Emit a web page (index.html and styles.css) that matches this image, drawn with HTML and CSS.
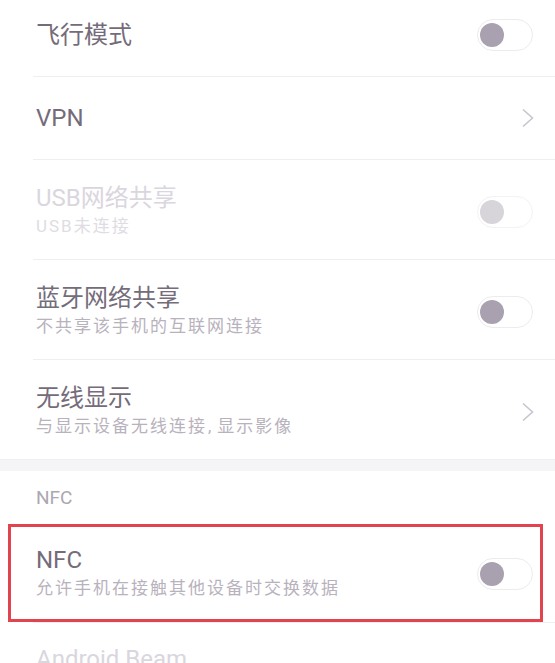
FILE: index.html
```html
<!DOCTYPE html>
<html>

<head>
    <meta charset="utf-8">
    <link rel="stylesheet" href="styles.css">
</head>

<body>
    <div class="list">
        <div class="row single">
            <div class="text"><div class="title">飞行模式</div></div>
            <div class="switch"><span class="knob"></span></div>
        </div>
        <div class="row single">
            <div class="text"><div class="title">VPN</div></div>
            <div class="chevron">
                <svg width="14" height="20" viewBox="0 0 14 20"><path d="M2 1.5 L11.5 10 L2 18.5" fill="none" stroke="#c9c4cd" stroke-width="1.6"/></svg>
            </div>
        </div>
        <div class="row double disabled">
            <div class="text">
                <div class="title">USB网络共享</div>
                <div class="summary">USB未连接</div>
            </div>
            <div class="switch"><span class="knob"></span></div>
        </div>
        <div class="row double">
            <div class="text">
                <div class="title">蓝牙网络共享</div>
                <div class="summary">不共享该手机的互联网连接</div>
            </div>
            <div class="switch"><span class="knob"></span></div>
        </div>
        <div class="row double last">
            <div class="text">
                <div class="title">无线显示</div>
                <div class="summary">与显示设备无线连接<span class="comma">,</span>显示影像</div>
            </div>
            <div class="chevron">
                <svg width="14" height="20" viewBox="0 0 14 20"><path d="M2 1.5 L11.5 10 L2 18.5" fill="none" stroke="#c9c4cd" stroke-width="1.6"/></svg>
            </div>
        </div>
    </div>

    <div class="gap"></div>

    <div class="list">
        <div class="header">NFC</div>
        <div class="row double marked">
            <div class="text">
                <div class="title">NFC</div>
                <div class="summary">允许手机在接触其他设备时交换数据</div>
            </div>
            <div class="switch"><span class="knob"></span></div>
        </div>
        <div class="row beam disabled">
            <div class="text">
                <div class="title">Android Beam</div>
            </div>
        </div>
    </div>
</body>

</html>
```

FILE: styles.css
```css
body {
    margin: 0;
    background-color: #fff;
    font-family: Roboto, "Noto Sans CJK SC", sans-serif;
    overflow: hidden;
}

.list {
    background-color: #fff;
}

.list:first-child {
    margin-top: -6px;
}

.row {
    display: flex;
    align-items: center;
    justify-content: space-between;
    margin-left: 33px;
    padding: 0 22px 0 3px;
    border-bottom: 1px solid #f0eef2;
    position: relative;
}

.row.single {
    height: 82px;
}

.row.double {
    padding-top: 24px;
    padding-bottom: 19px;
    box-sizing: border-box;
    height: 100px;
}

.row.last {
    border-bottom: none;
    height: 99px;
}

.title {
    font-size: 24px;
    line-height: 28px;
    color: #746c7a;
}

.summary {
    font-size: 17px;
    line-height: 28px;
    letter-spacing: 2px;
    color: #b8b2bd;
}

.summary .comma {
    margin: 0 4px 0 1px;
}

.disabled .title {
    color: #dad6de;
}

.disabled .summary {
    color: #e0dce3;
}

.switch {
    width: 56px;
    height: 32px;
    box-sizing: border-box;
    border: 1.5px solid #ecebee;
    border-radius: 16px;
    background-color: #fff;
    display: flex;
    align-items: center;
    padding-left: 2px;
}

.knob {
    width: 24px;
    height: 24px;
    border-radius: 50%;
    background-color: #a9a1b0;
}

.disabled .knob {
    background-color: #d7d4da;
}

.disabled .switch {
    border-color: #f3f2f4;
}

.chevron {
    display: flex;
    margin-right: -2px;
}

.gap {
    height: 12px;
    background-color: #f5f4f6;
    border-top: 1px solid #efeef1;
    box-sizing: border-box;
}

.header {
    height: 53px;
    box-sizing: border-box;
    padding: 17px 0 0 36px;
    font-size: 19px;
    line-height: 20px;
    color: #aca7b1;
}

.row.marked {
    height: 99px;
    padding-top: 22px;
    padding-bottom: 21px;
}

.row.marked::after {
    content: "";
    position: absolute;
    top: 0;
    bottom: 0;
    left: -25px;
    right: 12px;
    border: 3px solid #e1434f;
}

.row.beam {
    align-items: flex-start;
    padding-top: 22px;
    height: 80px;
    border-bottom: none;
}
```
